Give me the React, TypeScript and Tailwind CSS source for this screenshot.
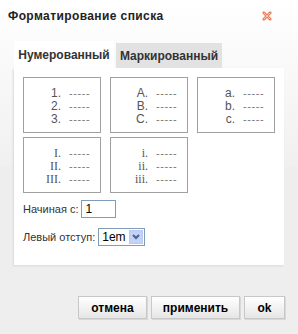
const font = { fontFamily: '"Liberation Sans", Arial, sans-serif' };

type Sample = { id: string; marks: string[]; serif?: boolean };

const samples: Sample[] = [
  { id: "num", marks: ["1.", "2.", "3."] },
  { id: "upper", marks: ["A.", "B.", "C."] },
  { id: "lower", marks: ["a.", "b.", "c."] },
  { id: "roman", marks: ["I.", "II.", "III."], serif: true },
  { id: "lroman", marks: ["i.", "ii.", "iii."], serif: true },
];

function SampleBox({ marks, serif }: Sample) {
  return (
    <div className="flex h-[56px] w-[78px] items-center justify-center border border-[#a0a0a0] bg-white pt-[2px]">
      <div className="ml-[4px] grid grid-cols-[24px_30px] text-[12px] leading-[13px] text-[#555]">
        {marks.map((m) => (
          <div key={m} className="contents">
            <span
              className="text-right"
              style={serif ? { fontFamily: '"Liberation Serif", serif', fontSize: 12 } : undefined}
            >
              {m}
            </span>
            <span className="pl-[8px] text-[11px] tracking-[0.6px] text-[#777]">-----</span>
          </div>
        ))}
      </div>
    </div>
  );
}

function Btn({ label, w }: { label: string; w: string }) {
  return (
    <button
      className={`${w} h-[23px] border border-[#c8c8c8] bg-gradient-to-b from-white to-[#e6e6e6] text-[12px] font-bold text-black shadow-[1px_1px_0_#d8d8d8]`}
      style={font}
    >
      {label}
    </button>
  );
}

export default function App() {
  return (
    <div
      className="flex h-[334px] w-[298px] flex-col bg-gradient-to-b from-white via-[#f0f0f0] to-[#eeeeee] to-[20%]"
      style={font}
    >
      <div className="flex h-[30px] items-center justify-between pl-[8px] pr-[26px] pt-[1px]">
        <span className="text-[12px] font-bold tracking-[0.4px] text-[#222]">Форматирование списка</span>
        <svg width="10" height="10" viewBox="0 0 11 11">
          <path d="M2 2 L9 9 M9 2 L2 9" stroke="#f07a55" strokeWidth="3" strokeLinecap="round" />
          <path d="M2 2 L9 9 M9 2 L2 9" stroke="#fbd0c0" strokeWidth="1" />
        </svg>
      </div>

      <div className="ml-[14px] mt-[11px] flex items-end gap-[2px]">
        <div className="flex h-[27px] w-[100px] items-center justify-center bg-white text-[12px] font-bold text-[#333]">
          Нумерованный
        </div>
        <div className="flex h-[25px] w-[106px] items-center justify-center bg-[#e2e2e2] text-[12px] font-bold text-[#333]">
          Маркированный
        </div>
      </div>

      <div className="ml-[14px] h-[197px] w-[270px] bg-white px-[9px] pt-[9px] shadow-[-1px_1px_2px_#d8d8d8]">
        <div className="grid grid-cols-[78px_78px_78px] gap-x-[9px] gap-y-[4px]">
          {samples.map((s) => (
            <SampleBox key={s.id} {...s} />
          ))}
        </div>

        <div className="mt-[7px] flex items-center gap-[3px] text-[11px] text-[#333]">
          <span>Начиная с:</span>
          <input
            defaultValue="1"
            className="h-[18px] w-[35px] border border-[#7f9db9] px-[3px] text-[12px] text-black outline-none"
            style={font}
          />
        </div>

        <div className="mt-[10px] flex items-center gap-[3px] text-[11px] text-[#333]">
          <span>Левый отступ:</span>
          <div className="flex h-[18px] w-[47px] items-center border border-[#7f9db9] bg-white text-[12px]">
            <span className="flex-1 pl-[3px] text-black">1em</span>
            <span className="mr-[1px] flex h-[14px] w-[14px] items-center justify-center border border-[#b9c9ef] bg-[#c1d3fb]">
              <svg width="8" height="6" viewBox="0 0 8 6">
                <path d="M1 1 L4 4 L7 1" stroke="#4d6185" strokeWidth="2" fill="none" />
              </svg>
            </span>
          </div>
        </div>
      </div>

      <div className="mr-[13px] mt-[31px] flex justify-end gap-[4px]">
        <Btn label="отмена" w="w-[69px]" />
        <Btn label="применить" w="w-[89px]" />
        <Btn label="ok" w="w-[41px]" />
      </div>
    </div>
  );
}
